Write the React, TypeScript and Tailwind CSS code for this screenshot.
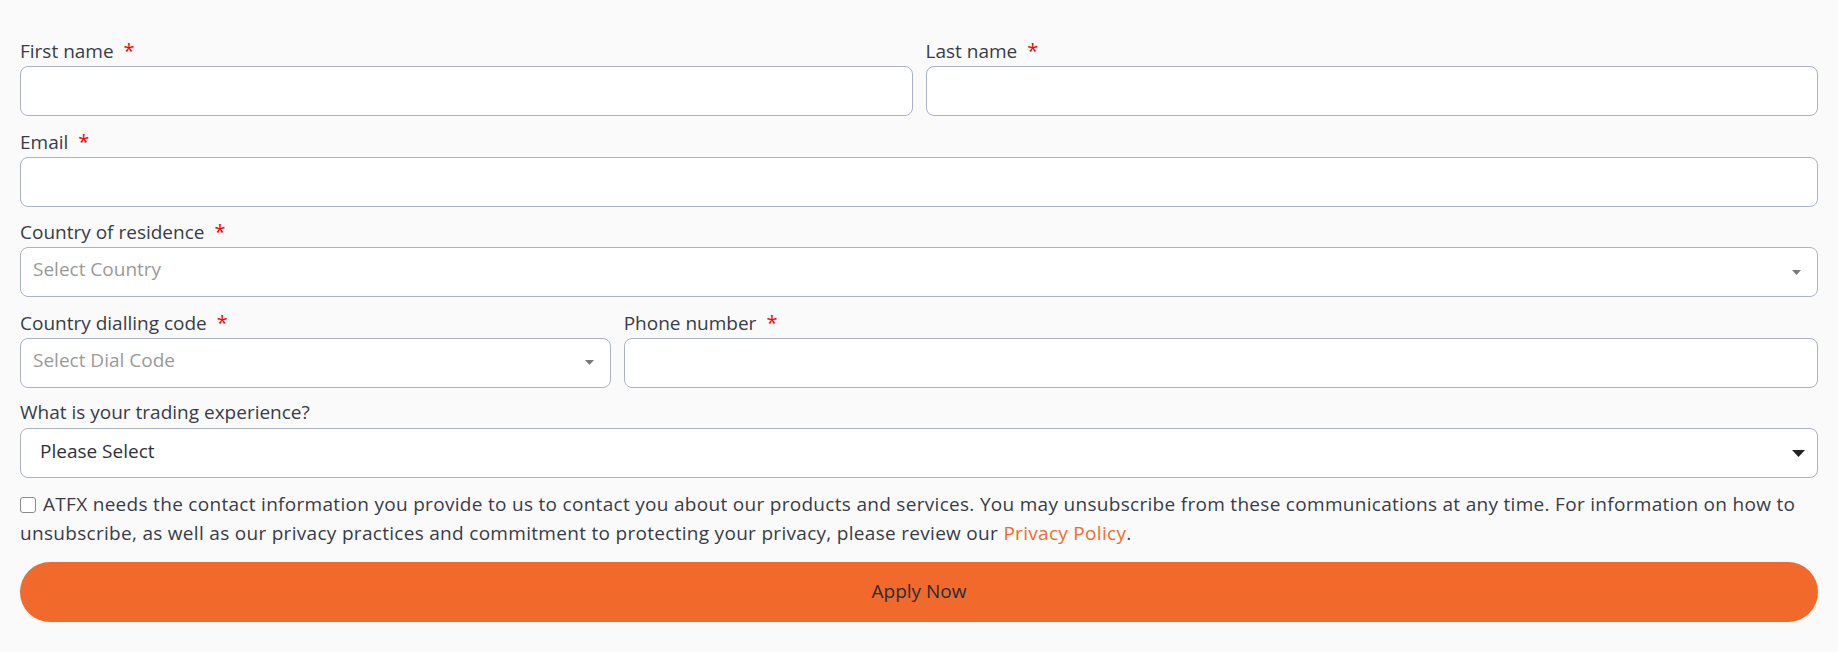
import React from "react";

const labelCls =
  "block h-[27px] leading-[23px] text-[19px] text-[#383c48] whitespace-nowrap";
const boxCls =
  "h-[50px] w-full rounded-[8px] border border-[#aab3c3] bg-white";

function Req() {
  return <span className="ml-[10px] text-[20px] text-[#ff0000]">*</span>;
}

function TextField({ label, required = true }: { label: string; required?: boolean }) {
  return (
    <div className="mb-[13.5px]">
      <label className={labelCls}>
        {label}
        {required && <Req />}
      </label>
      <input type="text" className={`block ${boxCls} px-3 text-[19px] outline-none`} />
    </div>
  );
}

function Caret({ w, h, color }: { w: number; h: number; color: string }) {
  return (
    <svg width={w} height={h} viewBox="0 0 10 5" preserveAspectRatio="none" aria-hidden>
      <path d="M0 0 L10 0 L5 5 Z" fill={color} />
    </svg>
  );
}

function SelectField({
  label,
  placeholder,
  required = true,
}: {
  label: string;
  placeholder: string;
  required?: boolean;
}) {
  return (
    <div className="mb-[13.5px]">
      <label className={labelCls}>
        {label}
        {required && <Req />}
      </label>
      <div className={`flex items-center justify-between ${boxCls} pl-[12px] pr-[16px]`}>
        <span className="pb-[5px] text-[19px] text-[#9a9a9a]">{placeholder}</span>
        <Caret w={9} h={5} color="#7a7a7a" />
      </div>
    </div>
  );
}

export default function App() {
  return (
    <div className="min-h-screen bg-[#fafafa] px-[20px] pt-[39px] font-['Open_Sans','Lato',sans-serif] text-[#383c48]">
      <form onSubmit={(e) => e.preventDefault()}>
        <div className="grid grid-cols-2 gap-x-[13px]">
          <TextField label="First name" />
          <TextField label="Last name" />
        </div>

        <TextField label="Email" />

        <SelectField label="Country of residence" placeholder="Select Country" />

        <div className="grid grid-cols-3 gap-x-[13px]">
          <SelectField label="Country dialling code" placeholder="Select Dial Code" />
          <div className="col-span-2">
            <TextField label="Phone number" />
          </div>
        </div>

        <div className="mb-[13.5px]">
          <label className={labelCls}>What is your trading experience?</label>
          <div className={`flex items-center justify-between ${boxCls} pl-[19px] pr-[12px]`}>
            <span className="pb-[4px] text-[19px] text-[#2f323a]">Please Select</span>
            <Caret w={13} h={7} color="#222222" />
          </div>
        </div>

        <p className="-mt-[2px] text-[19px] leading-[29px] tracking-[0.3px] text-[#383c48]">
          <span className="mr-[7px] inline-block h-[16px] w-[16px] rounded-[3px] border border-[#8a8a8a] bg-white align-[-2px]" />
          ATFX needs the contact information you provide to us to contact you about our products
          and services. You may unsubscribe from these communications at any time. For
          information on how to unsubscribe, as well as our privacy practices and commitment to
          protecting your privacy, please review our{" "}
          <a href="#" className="text-[#f26a2d]">
            Privacy Policy
          </a>
          .
        </p>

        <button
          type="submit"
          className="mt-[14px] flex h-[60px] w-full items-center justify-center rounded-full bg-[#f2692c] text-[19px] text-[#2a2d35]"
        >
          Apply Now
        </button>
      </form>
    </div>
  );
}
